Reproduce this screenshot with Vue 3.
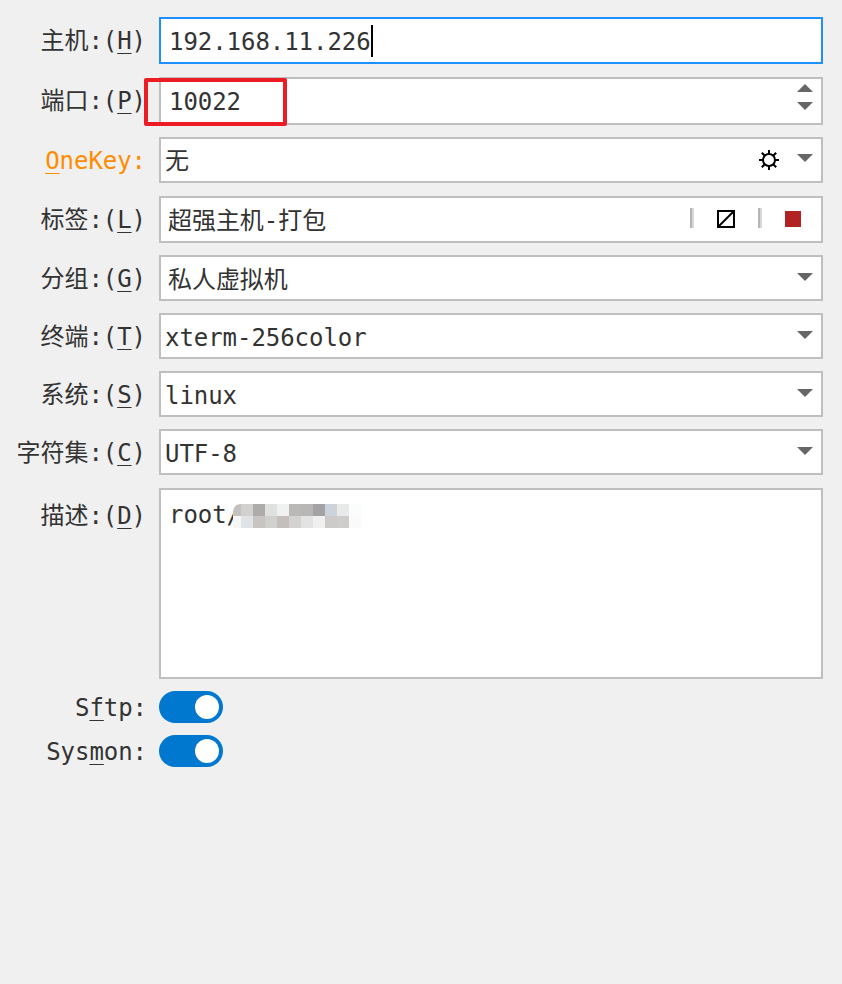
<template>
  <div class="form">
    <div v-for="f in fields" :key="f.text" class="row" :class="f.rowClass">
      <label class="lbl" :class="{ orange: f.orange }">
        <template v-if="f.key">{{ f.text }}(<u>{{ f.key }}</u>)</template>
        <template v-else><u>O</u>{{ f.text }}</template>
      </label>
      <div class="box" :class="f.boxClass">
        <span class="val" :class="f.valClass">{{ f.value }}</span>
        <i v-if="f.caret" class="caret"></i>
        <div v-if="f.spin" class="spin">
          <i class="tri up"></i>
          <i class="tri down"></i>
        </div>
        <svg v-if="f.gear" class="gear" width="20" height="20" viewBox="0 0 20 20">
          <circle cx="10" cy="10" r="6" fill="none" stroke="#000" stroke-width="2" />
          <path d="M10 0v5M10 15v5M0 10h5M15 10h5M2.800 2.800l3 3M14.200 14.200l3 3M2.800 17.200l3-3M14.200 5.800l3-3" stroke="#000" stroke-width="2" />
        </svg>
        <i v-if="f.drop" class="tri down drop" :class="{ high: f.gear }"></i>
        <div v-if="f.tools" class="tools">
          <i class="sep"></i>
          <svg class="colorbox" width="18" height="18" viewBox="0 0 18 18">
            <rect x="1" y="1" width="16" height="16" fill="#fff" stroke="#000" stroke-width="2" />
            <path d="M2 16L16 2" stroke="#000" stroke-width="2" />
          </svg>
          <i class="sep second"></i>
          <i class="red"></i>
        </div>
      </div>
    </div>

    <div class="row desc">
      <label class="lbl">描述:(<u>D</u>)</label>
      <div class="box area">
        <span class="val root">root/</span>
        <div class="mosaic">
          <i v-for="(c, i) in mosaic" :key="i" :style="{ background: c }"></i>
        </div>
      </div>
    </div>

    <div class="row switch-row">
      <label class="lbl">S<u>f</u>tp:</label>
      <div class="switch"><i></i></div>
    </div>
    <div class="row switch-row">
      <label class="lbl">Sys<u>m</u>on:</label>
      <div class="switch"><i></i></div>
    </div>

    <div class="mark"></div>
  </div>
</template>

<script setup>
const fields = [
  { text: '主机:', key: 'H', value: '192.168.11.226', rowClass: 'h47 gap13', boxClass: 'focus', valClass: 'ml8 down1', caret: true },
  { text: '端口:', key: 'P', value: '10022', rowClass: 'h48', valClass: 'ml8 down1', spin: true },
  { text: 'neKey:', value: '无', rowClass: 'h46 gap13', valClass: 'ml4 up2', orange: true, gear: true, drop: true },
  { text: '标签:', key: 'L', value: '超强主机-打包', rowClass: 'h47', valClass: 'ml7 up1', tools: true },
  { text: '分组:', key: 'G', value: '私人虚拟机', rowClass: 'h46', valClass: 'ml7 up1', drop: true },
  { text: '终端:', key: 'T', value: 'xterm-256color', rowClass: 'h46', valClass: 'ml4 down2', drop: true },
  { text: '系统:', key: 'S', value: 'linux', rowClass: 'h46', valClass: 'ml4 down2', drop: true },
  { text: '字符集:', key: 'C', value: 'UTF-8', rowClass: 'h46 gap13', valClass: 'ml4 down2', drop: true }
]

const mosaic = [
  '#c4c1c1', '#d3d0d0', '#aeabab', '#dfe1e0', '#f0f1f1', '#bab8b7', '#b9b7b6', '#a3a3a5', '#ccd3da', '#e8e9e8', '#fbfcfc',
  '#f6f6f6', '#e0e3e6', '#c8c4c1', '#d0d0ce', '#c4bfbb', '#d3d2d0', '#e2e3e2', '#f0f0f0', '#cccbca', '#cfcdcb', '#fafafa'
]
</script>

<style>
html, body {
  margin: 0;
  background: #f0f0f0;
}
</style>

<style scoped>
.form {
  box-sizing: border-box;
  position: relative;
  width: 842px;
  height: 984px;
  padding-top: 17px;
  background: #f0f0f0;
  color: #333;
  font-family: "DejaVu Sans Mono", "Noto Sans CJK SC", monospace;
  font-size: 24px;
  letter-spacing: -0.05px;
}
.row {
  display: flex;
  align-items: stretch;
  margin-bottom: 12px;
}
.h46 { height: 46px; }
.h47 { height: 47px; }
.h48 { height: 48px; }
.gap13 { margin-bottom: 13px; }
.lbl {
  flex: none;
  width: 146px;
  margin-right: 13px;
  text-align: right;
  white-space: nowrap;
  line-height: 49px;
}
.lbl u {
  text-decoration-thickness: 1px;
  text-underline-offset: 4px;
}
.orange { color: #ff8c00; }
.box {
  box-sizing: border-box;
  position: relative;
  display: flex;
  align-items: center;
  width: 664px;
  background: #fff;
  border: 2px solid #bfbfbf;
}
.focus { border-color: #1e90ff; }
.ml4 { margin-left: 4px; }
.ml7 { margin-left: 7px; }
.ml8 { margin-left: 8px; }
.down1 { margin-top: 2px; }
.down2 { margin-top: 4px; }
.up1 { margin-bottom: 2px; }
.up2 { margin-bottom: 4px; }
.caret {
  width: 2px;
  height: 32px;
  background: #000;
}
.tri {
  display: block;
  width: 0;
  height: 0;
  border-left: 8px solid transparent;
  border-right: 8px solid transparent;
}
.tri.up { border-bottom: 8px solid #666; }
.tri.down { border-top: 8px solid #666; }
.spin {
  position: absolute;
  right: 8px;
  top: 5px;
  display: flex;
  flex-direction: column;
  gap: 10px;
}
.drop {
  position: absolute;
  right: 8px;
  top: 16px;
}
.drop.high { top: 15px; }
.gear {
  position: absolute;
  left: 598px;
  top: 11px;
}
.tools {
  position: absolute;
  left: 529px;
  top: 10px;
  display: flex;
}
.sep {
  width: 2px;
  height: 20px;
  background: #b5b5b5;
  border-right: 2px solid #d8d8d8;
}
.colorbox {
  margin: 2px 0 0 23px;
}
.sep.second {
  margin-left: 23px;
}
.red {
  width: 16px;
  height: 16px;
  margin: 3px 0 0 23px;
  background: #b22222;
}
.desc { height: 191px; }
.desc .lbl { line-height: 56px; }
.area {
  align-items: flex-start;
}
.root {
  margin: 9px 0 0 8px;
  line-height: 32px;
}
.mosaic {
  position: absolute;
  left: 72px;
  top: 14px;
  display: grid;
  grid-template-columns: 8px repeat(10, 12px);
  grid-auto-rows: 12px;
  filter: blur(0.4px);
}
.mosaic i { display: block; }
.mosaic i:first-child { border-top-left-radius: 8px; }
.switch-row {
  height: 32px;
}
.switch-row .lbl {
  width: 147px;
  margin-right: 12px;
  line-height: 34px;
}
.switch {
  position: relative;
  width: 64px;
  height: 32px;
  border-radius: 16px;
  background: #0078d0;
}
.switch i {
  position: absolute;
  right: 4px;
  top: 4px;
  width: 24px;
  height: 24px;
  border-radius: 50%;
  background: #fff;
}
.mark {
  position: absolute;
  left: 144px;
  top: 78px;
  box-sizing: border-box;
  width: 143px;
  height: 48px;
  border: 4px solid #ed1c24;
  border-radius: 2px;
}
</style>
